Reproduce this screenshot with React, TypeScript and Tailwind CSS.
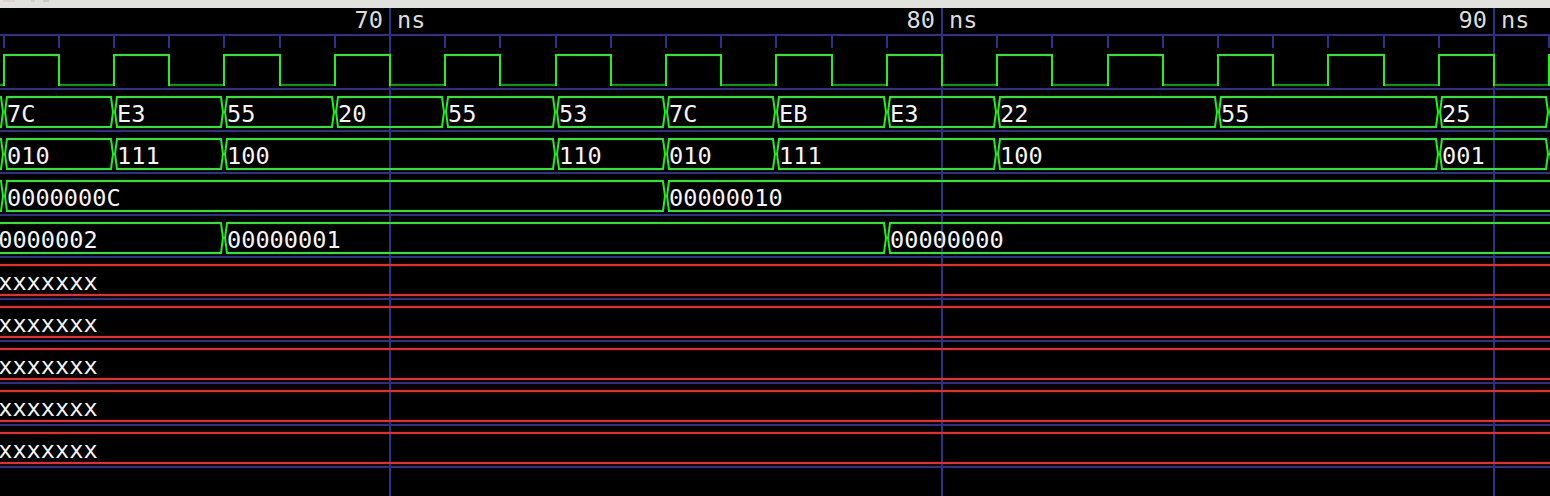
import React from "react";

const W = 1550;
const BLUE = "#2f2f8c";
const GREEN = "#1ff01f";
const DKGREEN = "#00a000";
const RED = "#ff2424";
const MARKERS = [390, 942, 1494];

const nsX = (ns: number) => Math.round(390 + (ns - 70) * 55.2);

function Markers({ h }: { h: number }) {
  return (
    <>
      {MARKERS.map((x) => (
        <line key={x} x1={x} x2={x} y1={0} y2={h} stroke={BLUE} strokeWidth={2} />
      ))}
    </>
  );
}

function Separator() {
  return <line x1={0} x2={W} y1={41} y2={41} stroke={BLUE} strokeWidth={2} />;
}

function Header() {
  const ticks: number[] = [];
  for (let ns = 63; ns <= 91; ns++) ticks.push(nsX(ns));
  const labels = [
    { x: 390, t: "70 ns" },
    { x: 942, t: "80 ns" },
    { x: 1494, t: "90 ns" },
  ];
  return (
    <svg width={W} height={40} className="block shrink-0 text-[23.6px]">
      <Markers h={40} />
      <line x1={0} x2={W} y1={27} y2={27} stroke={BLUE} strokeWidth={2} />
      {ticks.map((x) => (
        <line key={x} x1={x} x2={x} y1={28} y2={40} stroke={BLUE} strokeWidth={2} />
      ))}
      {labels.map((l) => (
        <text key={l.t} x={l.x} y={20} textAnchor="middle" fill="#dcdcdc">
          {l.t}
        </text>
      ))}
    </svg>
  );
}

function ClockRow() {
  const edges: number[] = [];
  for (let ns = 63; ns <= 92; ns++) edges.push(nsX(ns));
  const segs: { a: number; b: number; high: boolean }[] = [];
  let prev = -20;
  let high = false;
  for (const e of edges) {
    segs.push({ a: prev, b: e, high });
    prev = e;
    high = !high;
  }
  return (
    <svg width={W} height={42} className="block shrink-0">
      <Markers h={42} />
      <Separator />
      {segs.map((s, i) => (
        <line
          key={"h" + i}
          x1={s.a}
          x2={s.b}
          y1={s.high ? 7 : 37}
          y2={s.high ? 7 : 37}
          stroke={s.high ? GREEN : DKGREEN}
          strokeWidth={2}
          strokeLinecap="square"
        />
      ))}
      {edges.map((x) => (
        <line key={"e" + x} x1={x} x2={x} y1={7} y2={37} stroke={GREEN} strokeWidth={2} strokeLinecap="square" />
      ))}
    </svg>
  );
}

type Change = [number | null, string];

function BusRow({ changes }: { changes: Change[] }) {
  const xs = changes.map(([ns]) => (ns === null ? -60 : nsX(ns)));
  return (
    <svg width={W} height={42} className="block shrink-0 text-[23.6px]">
      <Markers h={42} />
      <Separator />
      {changes.map(([ns, v], i) => {
        const a = xs[i];
        const b = i + 1 < xs.length ? xs[i + 1] : W + 60;
        const d = `M ${a + 1} 22 L ${a + 3} 7 L ${b - 3} 7 L ${b - 1} 22 L ${b - 3} 37 L ${a + 3} 37 Z`;
        const tx = ns === null ? -16 : a + 3;
        return (
          <g key={i}>
            <path d={d} fill="none" stroke={GREEN} strokeWidth={2} />
            {v && (
              <text x={tx} y={32} fill="#f4f4f4">
                {v}
              </text>
            )}
          </g>
        );
      })}
    </svg>
  );
}

function XRow() {
  return (
    <svg width={W} height={42} className="block shrink-0 text-[23.6px]">
      <Markers h={42} />
      <Separator />
      <line x1={0} x2={W} y1={7} y2={7} stroke={RED} strokeWidth={2} />
      <line x1={0} x2={W} y1={37} y2={37} stroke={RED} strokeWidth={2} />
      <text x={-16} y={32} fill="#f4f4f4">
        xxxxxxxx
      </text>
    </svg>
  );
}

const bus1: Change[] = [
  [null, ""],
  [63, "7C"],
  [65, "E3"],
  [67, "55"],
  [69, "20"],
  [71, "55"],
  [73, "53"],
  [75, "7C"],
  [77, "EB"],
  [79, "E3"],
  [81, "22"],
  [85, "55"],
  [89, "25"],
  [91, ""],
];

const bus2: Change[] = [
  [null, ""],
  [63, "010"],
  [65, "111"],
  [67, "100"],
  [73, "110"],
  [75, "010"],
  [77, "111"],
  [81, "100"],
  [89, "001"],
  [91, ""],
];

const bus3: Change[] = [
  [null, ""],
  [63, "0000000C"],
  [75, "00000010"],
];

const bus4: Change[] = [
  [null, "00000002"],
  [67, "00000001"],
  [79, "00000000"],
];

export default function App() {
  return (
    <div className="w-[1550px] h-[496px] bg-black overflow-hidden flex flex-col font-['DejaVu_Sans_Mono',monospace]">
      <div className="h-[8px] shrink-0 bg-[#e1e1dd] flex items-start">
        <div className="ml-[3px] w-[12px] h-[2px] bg-[#ddd0d0]" />
        <div className="ml-[16px] w-[4px] h-[2px] bg-[#cfcfcf]" />
        <div className="ml-[8px] w-[6px] h-[2px] bg-[#c9c9cf]" />
      </div>
      <Header />
      <ClockRow />
      <BusRow changes={bus1} />
      <BusRow changes={bus2} />
      <BusRow changes={bus3} />
      <BusRow changes={bus4} />
      <XRow />
      <XRow />
      <XRow />
      <XRow />
      <XRow />
      <svg width={W} height={28} className="block shrink-0">
        <Markers h={28} />
      </svg>
    </div>
  );
}
